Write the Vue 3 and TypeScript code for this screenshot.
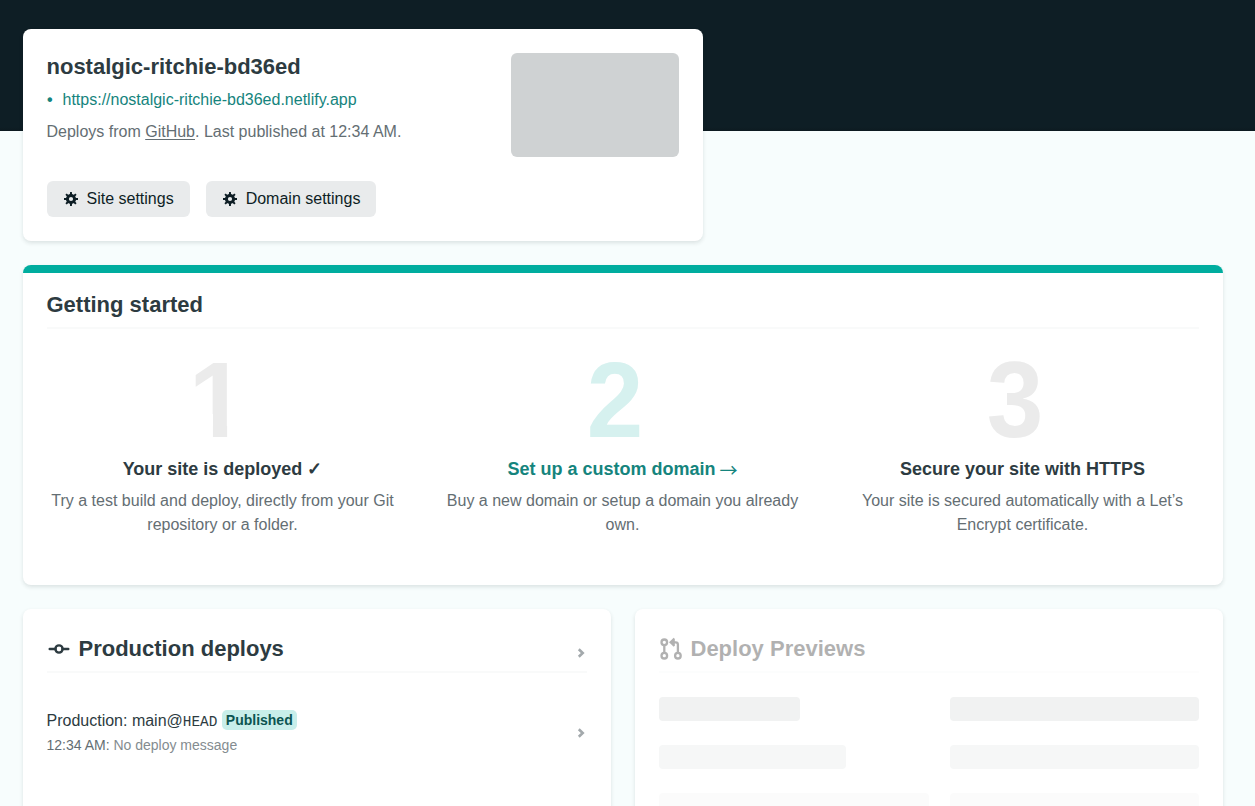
<script setup lang="ts">
interface Step {
  n: number
  title: string
  mark?: string
  text: string
  active?: boolean
}

const steps: Step[] = [
  { n: 1, title: 'Your site is deployed ✓', text: 'Try a test build and deploy, directly from your Git repository or a folder.' },
  { n: 2, title: 'Set up a custom domain', mark: '→', text: 'Buy a new domain or setup a domain you already own.', active: true },
  { n: 3, title: 'Secure your site with HTTPS', text: 'Your site is secured automatically with a Let’s Encrypt certificate.' },
]

const actions: string[] = ['Site settings', 'Domain settings']
const placeholderWidths: number[] = [141, 187, 270]
const teeth: number[] = [0, 45, 90, 135, 180, 225, 270, 315]
</script>

<template>
  <div class="page">
    <main class="content">
      <section class="card site">
        <div class="site-top">
          <div>
            <h1>nostalgic-ritchie-bd36ed</h1>
            <p class="site-url"><span class="dot">•</span><a>https://nostalgic-ritchie-bd36ed.netlify.app</a></p>
            <p class="site-meta">Deploys from <a class="repo">GitHub</a>. Last published at 12:34 AM.</p>
          </div>
          <div class="thumb"></div>
        </div>
        <div class="actions">
          <button v-for="label in actions" :key="label" type="button">
            <svg width="16" height="16" viewBox="0 0 16 16">
              <circle cx="8" cy="8" r="3.6" fill="none" stroke="currentColor" stroke-width="3" />
              <path
                v-for="a in teeth"
                :key="a"
                d="M6.900 4L7.100 1h1.800l.2 3z"
                :transform="`rotate(${a} 8 8)`"
                fill="currentColor"
              />
            </svg>
            {{ label }}
          </button>
        </div>
      </section>

      <section class="card started">
        <h2>Getting started</h2>
        <div class="steps">
          <div v-for="s in steps" :key="s.n" class="step" :class="{ active: s.active }">
            <div class="num"><span :class="{ one: s.n === 1 }">{{ s.n }}</span></div>
            <h3>{{ s.title }}<template v-if="s.mark">&nbsp;<span class="arrow">{{ s.mark }}</span></template></h3>
            <p>{{ s.text }}</p>
          </div>
        </div>
      </section>

      <div class="columns">
        <section class="card panel">
          <header>
            <svg width="24" height="24" viewBox="0 0 24 24" fill="none" stroke="currentColor">
              <path d="M2.700 12h5.800M15.500 12h5.800" stroke-width="2.400" stroke-linecap="round" />
              <circle cx="12" cy="12" r="3.600" stroke-width="2.400" />
            </svg>
            <h2>Production deploys</h2>
            <svg class="chevron head-chevron" width="8" height="10" viewBox="0 0 8 10"><path d="M1.800 1.300L5.700 5L1.800 8.700" /></svg>
          </header>
          <div class="deploy">
            <div>
              <div class="deploy-title">Production: main@<code>HEAD</code> <span class="tag">Published</span></div>
              <div class="deploy-meta">12:34 AM: <span>No deploy message</span></div>
            </div>
            <svg class="chevron" width="8" height="10" viewBox="0 0 8 10"><path d="M1.800 1.300L5.700 5L1.800 8.700" /></svg>
          </div>
        </section>

        <section class="card panel">
          <header class="muted">
            <svg width="24" height="24" viewBox="0 0 24 24" fill="none" stroke="currentColor" stroke-width="2.300">
              <circle cx="5.300" cy="5.300" r="2.800" />
              <circle cx="5.300" cy="18.700" r="2.800" />
              <circle cx="18.900" cy="18.700" r="2.800" />
              <path d="M5.300 8v8M18.900 16V7.500Q18.900 5.300 16.700 5.300H13" />
              <path d="M10 5.300L14.700 0.800L15.800 2V8.600L14.700 9.800Z" fill="currentColor" stroke="none" />
            </svg>
            <h2>Deploy Previews</h2>
          </header>
          <div class="skeleton">
            <div v-for="w in placeholderWidths" :key="w" class="skeleton-row">
              <span class="bar" :style="{ width: w + 'px' }"></span>
              <span class="bar wide"></span>
            </div>
          </div>
        </section>
      </div>
    </main>
  </div>
</template>

<style>
body {
  margin: 0;
  background: #f7fdfd;
}
</style>

<style scoped>
.page {
  box-sizing: border-box;
  height: 806px;
  overflow: hidden;
  padding: 29px 32.5px 0 22.5px;
  background: linear-gradient(#0e1e25 0 127px, #0c1a20 131px, #f7fdfd 131px);
  font: 16px/24px "Liberation Sans", Arial, sans-serif;
  color: #2d3b41;
}
h1, h2, h3, p { margin: 0; }
h1, h2 {
  font-size: 22px;
  line-height: 28px;
  font-weight: 700;
}
.content {
  display: flex;
  flex-direction: column;
  gap: 24px;
}
.card {
  box-sizing: border-box;
  padding: 24px;
  border-radius: 8px;
  background: #fff;
  box-shadow: 0 2px 4px rgba(14, 30, 37, 0.12);
}
.site {
  width: 680px;
  height: 212px;
}
.site-top {
  display: flex;
  justify-content: space-between;
  height: 128px;
}
.site-url {
  margin-top: 7px;
  line-height: 24px;
  color: #15847d;
}
.dot {
  display: inline-block;
  box-sizing: border-box;
  width: 16px;
  padding-left: 0.500px;
  font-weight: 700;
}
.site-meta {
  margin-top: 8px;
  color: #646e73;
}
.repo {
  text-decoration: underline;
  text-decoration-thickness: 1px;
  text-underline-offset: 2px;
}
.thumb {
  width: 168px;
  height: 104px;
  border-radius: 6px;
  background: #cfd2d3;
}
.actions {
  display: flex;
  gap: 16px;
}
button {
  display: flex;
  align-items: center;
  gap: 8px;
  height: 36px;
  padding: 0 16px;
  border: 0;
  border-radius: 6px;
  background: #e9ebec;
  color: #0e1e25;
  font: inherit;
}
.started {
  height: 320px;
  padding-top: 18px;
  border-top: 8px solid #00ad9f;
}
.started h2 {
  padding-bottom: 8px;
  border-bottom: 2px solid #f9fafa;
}
.steps {
  display: grid;
  grid-template-columns: repeat(3, 1fr);
  gap: 48px;
  padding-top: 24px;
  text-align: center;
}
.num {
  height: 104px;
  margin-right: 16px;
  font-size: 107.500px;
  line-height: 94px;
  font-weight: 700;
  color: #ebebeb;
}
.num span {
  display: inline-block;
  transform: scaleX(0.945);
}
/* the numeral one is drawn without its foot serif */
.num .one {
  transform: translateX(2.500px) scaleX(0.955);
  clip-path: polygon(0 0, 67% 0, 67% 100%, 42.200% 100%, 42.200% 65%, 0 65%);
}
.step h3 {
  font-size: 18px;
  line-height: 24px;
}
.step p {
  margin-top: 8px;
  color: #646e73;
}
.arrow {
  display: inline-block;
  margin-left: -1px;
  font-family: "Noto Sans CJK JP", sans-serif;
  font-weight: 400;
  line-height: 1;
  transform: translateY(2px);
}
.active .num { color: #d6f1ef; }
.active h3 { height: 24px; color: #15847d; }
.columns {
  display: grid;
  grid-template-columns: 1fr 1fr;
  gap: 24px;
}
.panel { height: 260px; }
.panel header {
  display: flex;
  align-items: center;
  gap: 8px;
  height: 38px;
  border-bottom: 2px solid #f9fafa;
}
.panel header h2,
.panel header > svg:first-child { margin-top: -7px; }
.muted { opacity: 0.36; color: #2a2a2a; }
.chevron {
  flex: none;
  margin-right: 1.500px;
  fill: none;
  stroke: #a3a9ac;
  stroke-width: 2.600;
}
.head-chevron { margin-left: auto; margin-top: 2px; }
.deploy {
  display: flex;
  align-items: center;
  justify-content: space-between;
  margin-top: 36px;
}
.deploy-title {
  height: 24px;
  line-height: 24px;
}
code {
  font: 14.400px "Liberation Mono", monospace;
}
.tag {
  display: inline-block;
  height: 20px;
  padding: 0 4px;
  border-radius: 5px;
  background: #c8eeea;
  color: #0c5451;
  font-size: 14px;
  line-height: 20px;
  font-weight: 700;
  vertical-align: 1px;
}
.deploy-meta {
  font-size: 14px;
  line-height: 24px;
  color: #646e73;
}
.deploy-meta span { color: #848c90; }
.skeleton {
  display: flex;
  flex-direction: column;
  gap: 24px;
  height: 109px;
  padding-top: 24px;
  overflow: hidden;
}
.skeleton-row {
  display: flex;
  flex: none;
  justify-content: space-between;
}
.bar {
  height: 24px;
  border-radius: 4px;
  background: #f1f2f2;
}
.wide { width: 249px; }
.skeleton-row:nth-child(2) .bar { background: #f6f7f7; }
.skeleton-row:nth-child(3) .bar { background: #fbfbfb; }
</style>
